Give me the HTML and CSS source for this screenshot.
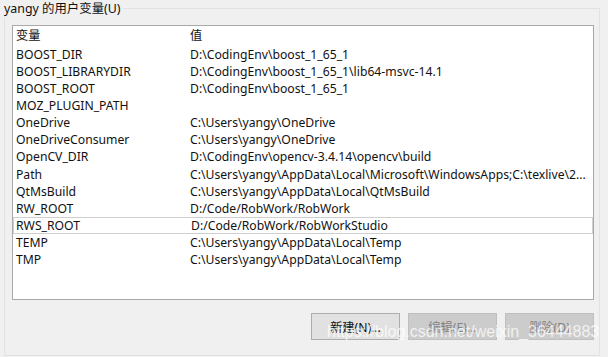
FILE: index.html
```html
<!DOCTYPE html>
<html lang="zh-CN">

<head>
    <meta charset="UTF-8">
    <meta name="viewport" content="width=device-width, initial-scale=1.0">
    <title>用户变量</title>
    <link rel="stylesheet" href="styles.css">
</head>

<body>
    <fieldset class="userVars">
        <legend>yangy 的用户变量(U)</legend>
        <div class="varList">
            <div class="listHead">
                <span>变量</span>
                <span>值</span>
            </div>
            <div class="row"><span>BOOST_DIR</span><span>D:\CodingEnv\boost_1_65_1</span></div>
            <div class="row"><span>BOOST_LIBRARYDIR</span><span>D:\CodingEnv\boost_1_65_1\lib64-msvc-14.1</span></div>
            <div class="row"><span>BOOST_ROOT</span><span>D:\CodingEnv\boost_1_65_1</span></div>
            <div class="row"><span>MOZ_PLUGIN_PATH</span><span></span></div>
            <div class="row"><span>OneDrive</span><span>C:\Users\yangy\OneDrive</span></div>
            <div class="row"><span>OneDriveConsumer</span><span>C:\Users\yangy\OneDrive</span></div>
            <div class="row"><span>OpenCV_DIR</span><span>D:\CodingEnv\opencv-3.4.14\opencv\build</span></div>
            <div class="row"><span>Path</span><span>C:\Users\yangy\AppData\Local\Microsoft\WindowsApps;C:\texlive\2...</span></div>
            <div class="row"><span>QtMsBuild</span><span>C:\Users\yangy\AppData\Local\QtMsBuild</span></div>
            <div class="row"><span>RW_ROOT</span><span>D:/Code/RobWork/RobWork</span></div>
            <div class="row focused"><span>RWS_ROOT</span><span>D:/Code/RobWork/RobWorkStudio</span></div>
            <div class="row"><span>TEMP</span><span>C:\Users\yangy\AppData\Local\Temp</span></div>
            <div class="row"><span>TMP</span><span>C:\Users\yangy\AppData\Local\Temp</span></div>
        </div>
        <div class="btnGroup">
            <button>新建(N)...</button>
            <button disabled>编辑(E)...</button>
            <button disabled>删除(D)</button>
        </div>
    </fieldset>
    <div class="watermark">https://blog.csdn.net/weixin_36444883</div>
</body>

</html>
```

FILE: styles.css
```css
body {
    margin: 0;
    height: 357px;
    background: #f0f0f0;
    font-family: "Noto Sans", "Noto Sans CJK SC", sans-serif;
    color: #111;
    position: relative;
    overflow: hidden;
}

.userVars {
    margin: 0 8px 0 4px;
    padding: 8px 5px 0 7px;
    border: 1px solid #e2e2e2;
    height: 356px;
    box-sizing: border-box;
}

.userVars>legend {
    padding: 0 2px 0 0;
    margin-left: -8px;
    font-size: 12.4px;
    line-height: 17px;
}

.varList {
    height: 275px;
    box-sizing: border-box;
    border: 1px solid #a9a9a9;
    padding-top: 1px;
    background: #fff;
    font-size: 12.2px;
}

.listHead,
.row {
    display: grid;
    grid-template-columns: 174px 1fr;
    white-space: nowrap;
}

.listHead {
    height: 18.5px;
    line-height: 18.5px;
}

.row {
    height: 17.17px;
    line-height: 17.17px;
    box-sizing: border-box;
}

.listHead>span,
.row>span {
    padding-left: 3px;
    overflow: hidden;
}

.row.focused {
    border: 1px solid #cfcfcf;
    line-height: 15.17px;
}

.row.focused>span:first-child {
    padding-left: 2px;
}

.btnGroup {
    display: flex;
    justify-content: flex-end;
    gap: 8px;
    margin-top: 13px;
}

button {
    box-sizing: border-box;
    width: 89px;
    height: 27px;
    padding: 0;
    font-family: "Noto Sans", "Noto Sans CJK SC", sans-serif;
    font-size: 12.2px;
    color: #111;
    background: #e1e1e1;
    border: 1px solid #adadad;
}

button:disabled {
    background: #cccccc;
    border-color: #bfbfbf;
    color: #838383;
}

.watermark {
    position: absolute;
    left: 327px;
    top: 322px;
    font-family: "Liberation Sans", sans-serif;
    font-size: 16px;
    line-height: 20px;
    color: rgba(255, 255, 255, 0.75);
    pointer-events: none;
}
```
